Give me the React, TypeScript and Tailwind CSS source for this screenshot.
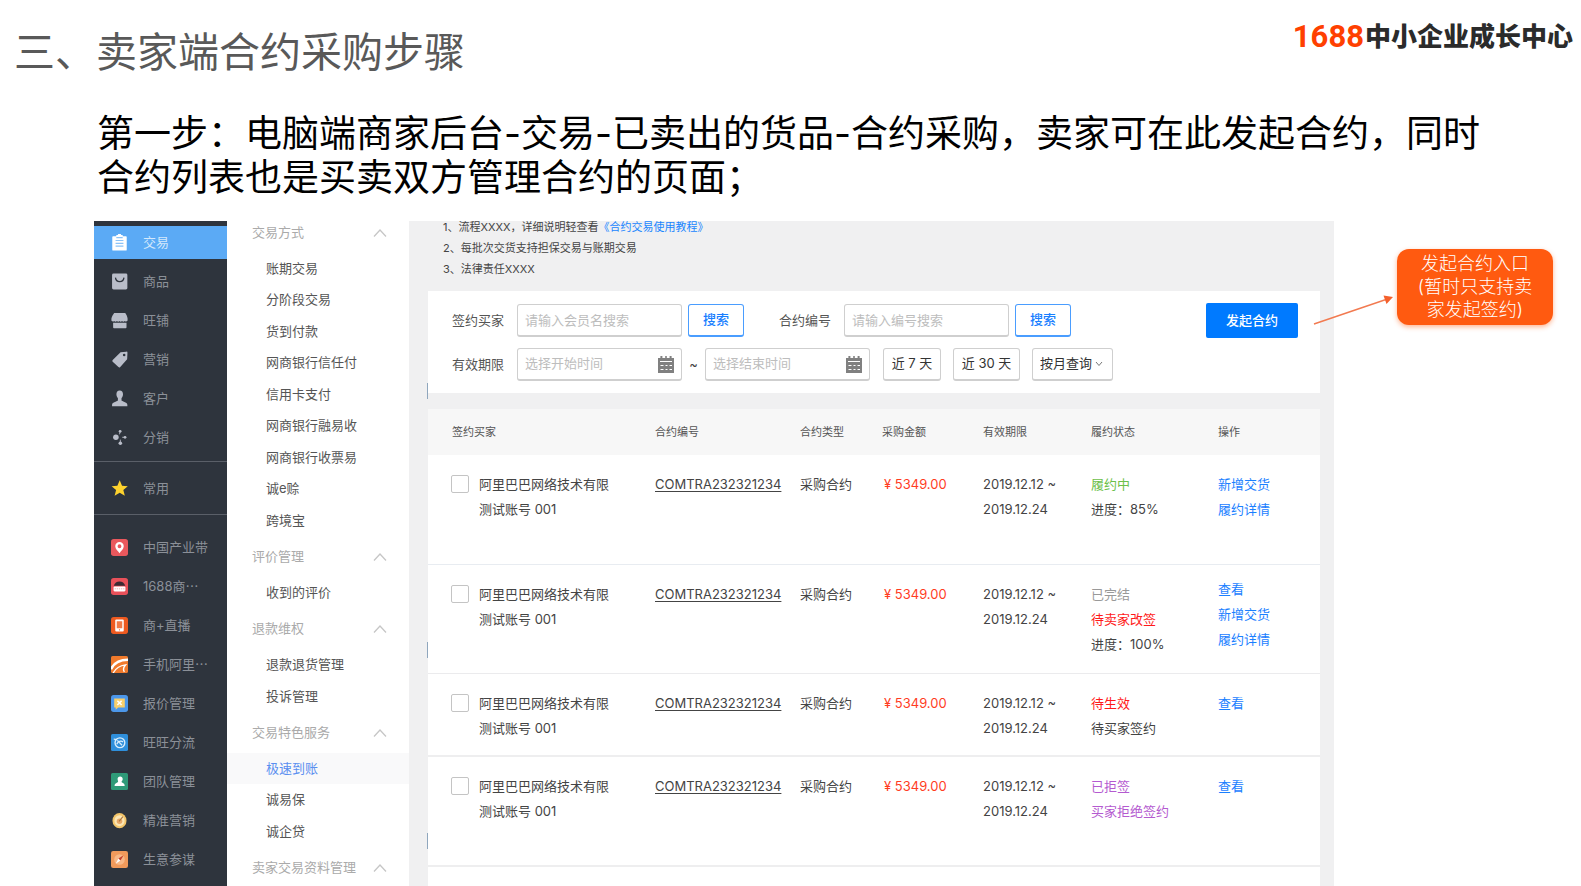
import React from "react";

type Icon = () => React.ReactElement;

const glyph = "h-[17px] w-[17px] shrink-0";

const ClipboardIcon: Icon = () => (
  <svg viewBox="0 0 16 16" className={glyph} aria-hidden="true">
    <path fill="#fff" d="M2 2h3V1h1.5a1.5 1.5 0 0 1 3 0H11v1h3a.8.8 0 0 1 .8.8v12a.8.8 0 0 1-.8.8H2a.8.8 0 0 1-.8-.8v-12A.8.8 0 0 1 2 2z" />
    <path stroke="#8cc3f8" strokeWidth="1" d="M4.3 6.2h7.4M4.3 8.8h7.4M4.3 11.4h7.4M5 3.4h6" />
  </svg>
);
const BagIcon: Icon = () => (
  <svg viewBox="0 0 16 16" className={glyph} aria-hidden="true">
    <rect x="1" y="0.5" width="14.4" height="15" rx="1.4" fill="#b9bdc9" />
    <path d="M4.2 4.4c.6 5 7.4 5 8 0" fill="none" stroke="#2e343d" strokeWidth="1.2" />
  </svg>
);
const ShopIcon: Icon = () => (
  <svg viewBox="0 0 16 16" className={glyph} aria-hidden="true">
    <path fill="#b9bdc9" d="M3 1h10.4c1 1.4 2 3.200 2.200 5.200v1.600c0 1-1.600 1.600-2.600.6-.8 1-2 1-2.600 0-.8 1-2 1-2.400 0-.6 1-1.800 1-2.400 0-.8 1-2 1-2.600 0-1 1-2.600.4-2.600-.6V6.200C.8 4.200 2 2.400 3 1zM2 10.200h12.600v4.200a.8.8 0 0 1-.8.8H2.800a.8.8 0 0 1-.8-.8z" />
  </svg>
);
const TagIcon: Icon = () => (
  <svg viewBox="0 0 16 16" className={glyph} aria-hidden="true">
    <path fill="#b9bdc9" fillRule="evenodd" d="M9 1.200 14.400.6a1 1 0 0 1 1.100 1.100l-.3 6-6.500 7.300a1.200 1.200 0 0 1-1.700.1L1.600 10.200a1.200 1.200 0 0 1 0-1.700zM12.400 2.600a1.200 1.200 0 1 0 0 2.400 1.200 1.200 0 0 0 0-2.400z" />
  </svg>
);
const PersonIcon: Icon = () => (
  <svg viewBox="0 0 16 16" className={glyph} aria-hidden="true">
    <path fill="#b9bdc9" d="M8.200.4c2 0 3.100 1.500 3.100 3.500 0 1.700-.7 3-1.400 3.700v2.200c0 .7 5.500 1.500 5.500 4v1.400H1v-1.400c0-2.500 5.500-3.300 5.500-4V7.600C5.800 6.900 5.100 5.600 5.100 3.900 5.100 1.900 6.200.4 8.200.4z" />
  </svg>
);
const ShareIcon: Icon = () => (
  <svg viewBox="0 0 16 16" className={glyph} aria-hidden="true">
    <g fill="#b9bdc9">
      <circle cx="4.600" cy="7.800" r="2.600" />
      <circle cx="8.600" cy="2.200" r="1.300" />
      <circle cx="13.200" cy="7.800" r="1.300" />
      <circle cx="8.800" cy="13.400" r="1.700" />
    </g>
    <path d="M8.600 2.200 8 5M10.500 7.800h2.700M8.800 13.400v-3.400" stroke="#b9bdc9" strokeWidth=".8" />
  </svg>
);
const StarIcon: Icon = () => (
  <svg viewBox="0 0 16 16" className={glyph} aria-hidden="true">
    <path fill="#fdd22e" d="m8.200.2 2.200 5.200 5.400.4-4.200 3.600 1.400 5.500-4.800-3-4.800 3 1.400-5.500L.600 5.800l5.400-.4z" />
  </svg>
);
const PinIcon: Icon = () => (
  <svg viewBox="0 0 16 16" className={glyph} aria-hidden="true">
    <rect width="16" height="16" rx="2.500" fill="#e9585d" />
    <path fill="#fff" fillRule="evenodd" d="M8 2.800a4 4 0 0 1 4 4c0 2.600-2.600 4.400-4 6.600-1.400-2.200-4-4-4-6.600a4 4 0 0 1 4-4zm0 2.200a1.800 1.800 0 1 0 0 3.600A1.800 1.800 0 0 0 8 5z" />
  </svg>
);
const MarketIcon: Icon = () => (
  <svg viewBox="0 0 16 16" className={glyph} aria-hidden="true">
    <rect width="16" height="16" rx="2.500" fill="#e8515a" />
    <path fill="#3a2a33" d="M2.600 7.400C3.400 4.600 5.400 3.200 8 3.200s4.600 1.400 5.400 4.200z" />
    <rect x="2.400" y="8" width="11.200" height="4.600" rx="1" fill="#fff" />
    <path d="M3.400 10.200h9.200" stroke="#e8a0a4" strokeWidth=".8" strokeDasharray="1.200 .8" />
  </svg>
);
const PhoneIcon: Icon = () => (
  <svg viewBox="0 0 16 16" className={glyph} aria-hidden="true">
    <rect width="16" height="16" rx="2.500" fill="#ee5a20" />
    <rect x="4" y="2.400" width="8" height="11.200" rx="1" fill="#fff" />
    <rect x="5.400" y="4" width="5.200" height="6.600" fill="#f07a48" />
    <circle cx="8" cy="12.100" r=".6" fill="#ee5a20" />
  </svg>
);
const AliIcon: Icon = () => (
  <svg viewBox="0 0 16 16" className={glyph} aria-hidden="true">
    <rect width="16" height="16" rx="1.500" fill="#f07a2c" />
    <path d="M0 12.500C3 6 9 3.600 16 3.600" fill="none" stroke="#fff" strokeWidth="2.400" />
    <path d="M2 16C4.500 11.500 9 9 13.600 8.400c-1.800 2-2.400 4.400-1 6.600" fill="none" stroke="#fff" strokeWidth="1.300" />
  </svg>
);
const QuoteIcon: Icon = () => (
  <svg viewBox="0 0 16 16" className={glyph} aria-hidden="true">
    <rect width="16" height="16" rx="2.500" fill="#4c97ea" />
    <path fill="#f8cf6a" d="M3 3.200h10v8.600H6.800L4.400 13.800v-2H3z" />
    <path d="m6 5.400 4 4m0-4-4 4" stroke="#fff" strokeWidth="1.500" />
  </svg>
);
const FlowIcon: Icon = () => (
  <svg viewBox="0 0 16 16" className={glyph} aria-hidden="true">
    <rect width="16" height="16" rx="1.500" fill="#2f8fdb" />
    <circle cx="8.400" cy="8.200" r="4.600" fill="none" stroke="#d9edfb" strokeWidth="1.300" />
    <path d="M5.400 9.600c1.400-3 4-3.400 6-2.200M6 6l4.400 4.600M2.600 4.800l3 .4" fill="none" stroke="#d9edfb" strokeWidth="1.200" />
  </svg>
);
const TeamIcon: Icon = () => (
  <svg viewBox="0 0 16 16" className={glyph} aria-hidden="true">
    <rect width="16" height="16" rx="1.500" fill="#2f9a78" />
    <path fill="#fff" d="M8.600 3.200c1.500 0 2.400 1 2.400 2.400 0 1.200-.6 2-1.200 2.600.2 1 3 1.200 3 3.200v.8H3.400v-.8c0-1.600 2.600-2.200 3.200-3 .4-.6-.4-1.400-.4-2.800 0-1.400.9-2.400 2.400-2.400z" />
  </svg>
);
const TargetIcon: Icon = () => (
  <svg viewBox="0 0 16 16" className={glyph} aria-hidden="true">
    <ellipse cx="8" cy="8.200" rx="6.600" ry="7.200" fill="#f3c56a" />
    <ellipse cx="8" cy="8.200" rx="4.800" ry="5.200" fill="#fbe6b4" />
    <circle cx="8" cy="8.600" r="2.600" fill="#e8a868" />
    <path d="m7.600 8.800 3.600-4.400" stroke="#a8743c" strokeWidth="1" />
  </svg>
);
const CompassIcon: Icon = () => (
  <svg viewBox="0 0 16 16" className={glyph} aria-hidden="true">
    <rect width="16" height="16" rx="2" fill="#f19a5b" />
    <circle cx="8" cy="8" r="5" fill="#f8b887" />
    <path fill="#fff" d="M4.400 12 7 7l2 2z" />
    <path fill="#c4402c" d="M11.800 4 7 7l2 2z" />
  </svg>
);

const CalendarIcon: Icon = () => (
  <svg viewBox="0 0 16 17" className="h-[17px] w-4 shrink-0" aria-hidden="true">
    <path fill="#808080" d="M0 2h2.400V0h2v2h2.800V0h1.600v2h2.800V0h2v2H16v15H0z" />
    <path stroke="#fff" strokeWidth="1" d="M2 5.500h12M2.500 9.500h3m2 0h2m2 0h2.500m-11.500 4h3m2 0h2m2 0h2.500" />
  </svg>
);

const ChevronUp: Icon = () => (
  <svg viewBox="0 0 14 10" className="h-[10px] w-[14px]" fill="none" stroke="#c6c6c6" strokeWidth="1.300" aria-hidden="true">
    <path d="M1 8.500 7 2l6 6.500" />
  </svg>
);

const mainNav: [string, Icon][] = [
  ["交易", ClipboardIcon],
  ["商品", BagIcon],
  ["旺铺", ShopIcon],
  ["营销", TagIcon],
  ["客户", PersonIcon],
  ["分销", ShareIcon],
];
const appNav: [string, Icon][] = [
  ["中国产业带", PinIcon],
  ["1688商⋯", MarketIcon],
  ["商+直播", PhoneIcon],
  ["手机阿里⋯", AliIcon],
  ["报价管理", QuoteIcon],
  ["旺旺分流", FlowIcon],
  ["团队管理", TeamIcon],
  ["精准营销", TargetIcon],
  ["生意参谋", CompassIcon],
];

const menu = [
  {
    title: "交易方式",
    height: "h-[283px]",
    items: ["账期交易", "分阶段交易", "货到付款", "网商银行信任付", "信用卡支付", "网商银行融易收", "网商银行收票易", "诚e赊", "跨境宝"],
  },
  { title: "评价管理", height: "h-[31px]", items: ["收到的评价"] },
  { title: "退款维权", height: "h-[63px]", items: ["退款退货管理", "投诉管理"] },
  { title: "交易特色服务", height: "h-[94px]", items: ["极速到账", "诚易保", "诚企贷"] },
  { title: "卖家交易资料管理", height: "h-0", items: [] },
];

type Status = [string, string];
const rows: { height: string; line: string; status: Status[]; actions: string[]; actionPad: string }[] = [
  {
    height: "h-[110px]",
    line: "border-b border-[#e8ecf1]",
    status: [["履约中", "text-[#6cc04a]"], ["进度：85%", "text-[#444]"]],
    actions: ["新增交货", "履约详情"],
    actionPad: "pt-[17px]",
  },
  {
    height: "h-[109px]",
    line: "border-b border-[#ebebed]",
    status: [["已完结", "text-[#999]"], ["待卖家改签", "text-[#ff1a1a]"], ["进度：100%", "text-[#444]"]],
    actions: ["查看", "新增交货", "履约详情"],
    actionPad: "pt-3",
  },
  {
    height: "h-[83px]",
    line: "border-b-2 border-[#eeeeef]",
    status: [["待生效", "text-[#ff1a1a]"], ["待买家签约", "text-[#444]"]],
    actions: ["查看"],
    actionPad: "pt-[17px]",
  },
  {
    height: "h-[110px]",
    line: "border-b-2 border-[#eeeeef]",
    status: [["已拒签", "text-[#b45ad0]"], ["买家拒绝签约", "text-[#b45ad0]"]],
    actions: ["查看"],
    actionPad: "pt-[17px]",
  },
];

function NavLink({ label, icon: IconView, active }: { label: string; icon: Icon; active?: boolean }) {
  return (
    <a
      href="#"
      className={`flex h-[33px] items-center gap-[15px] pl-[17px] text-[13px] whitespace-nowrap ${
        active ? "bg-[#5baaf5] text-[#d3e8fc]" : "text-[#8b9098]"
      }`}
    >
      <IconView />
      {label}
    </a>
  );
}

function Field({ id, label, placeholder }: { id: string; label: string; placeholder: string }) {
  return (
    <div className="flex items-center">
      <label htmlFor={id} className="w-[65px] text-[13px] text-[#555]">{label}</label>
      <input
        id={id}
        type="text"
        placeholder={placeholder}
        className="h-[33px] w-[165px] rounded-[3px] border border-b-2 border-[#cfcfcf] bg-white px-[7px] text-[13px] placeholder:text-[#bdbdbd]"
      />
      <button type="button" className="ml-[6px] h-[33px] w-[56px] rounded-[3px] border border-b-2 border-[#4a9dff] bg-white text-[13px] font-medium text-[#1a80ff]">
        搜索
      </button>
    </div>
  );
}

function DateField({ id, label, placeholder }: { id: string; label: string; placeholder: string }) {
  return (
    <div className="flex h-[33px] w-[165px] items-center rounded-[3px] border border-b-2 border-[#cfcfcf] bg-white px-[7px]">
      <input
        id={id}
        type="text"
        aria-label={label}
        placeholder={placeholder}
        className="min-w-0 flex-1 text-[13px] placeholder:text-[#bdbdbd]"
      />
      <CalendarIcon />
    </div>
  );
}

const smallButton = "h-[33px] rounded-[3px] border border-b-2 border-[#cfcfcf] bg-white text-[13px] text-[#333]";

export default function App() {
  return (
    <div className="flex h-screen flex-col overflow-hidden bg-white font-['Inter','Noto_Sans_CJK_SC',sans-serif] text-[#444]">
      <header className="flex items-start justify-between pr-2 pl-[14px]">
        <h1 className="pt-[22px] text-[41px] leading-[60px] text-[#595959]">三、卖家端合约采购步骤</h1>
        <div className="flex items-center pt-[17px] leading-10 whitespace-nowrap">
          <span className="font-['Roboto',sans-serif] text-[31px] font-bold text-[#ff4000]">1688</span>
          <span className="ml-px text-[26px] font-black text-[#2b2b2b]">中小企业成长中心</span>
        </div>
      </header>

      <p className="mt-[30px] pr-[80px] pl-[97px] text-[37px] leading-[44px] text-black">
        第一步：电脑端商家后台-交易-已卖出的货品-合约采购，卖家可在此发起合约，同时合约列表也是买卖双方管理合约的页面；
      </p>

      <div className="mt-[21px] flex min-h-0 flex-1 pl-[94px]">
        <div className="flex min-w-0 flex-1 overflow-hidden">
          <nav className="w-[133px] shrink-0 bg-[#2e343d] pt-[5px]" aria-label="主导航">
            <div className="flex flex-col gap-[6px] pb-[7px]">
              {mainNav.map(([label, icon], i) => (
                <NavLink key={label} label={label} icon={icon} active={i === 0} />
              ))}
            </div>
            <div className="border-y border-[#5a5f68] pt-[10px] pb-[9px]">
              <NavLink label="常用" icon={StarIcon} />
            </div>
            <div className="flex flex-col gap-[6px] pt-4">
              {appNav.map(([label, icon]) => (
                <NavLink key={label} label={label} icon={icon} />
              ))}
            </div>
          </nav>

          <nav className="w-[182px] shrink-0 overflow-hidden bg-white" aria-label="交易菜单">
            <div className="-mt-[9px]">
              {menu.map((group) => (
                <section key={group.title}>
                  <button type="button" className="flex h-[41px] w-full items-center justify-between pr-[22px] pl-[25px] text-[13px] text-[#aaa]">
                    {group.title}
                    <ChevronUp />
                  </button>
                  <ul className={`grid auto-rows-fr ${group.height}`}>
                    {group.items.map((item) => (
                      <li key={item} className={item === "极速到账" ? "flex items-center bg-[#f9f9fa] pl-[39px]" : "flex items-center pl-[39px]"}>
                        <a href="#" className={`text-[13px] ${item === "极速到账" ? "text-[#5b8ff0]" : "text-[#555]"}`}>{item}</a>
                      </li>
                    ))}
                  </ul>
                </section>
              ))}
            </div>
          </nav>

          <main className="relative flex min-w-0 flex-1 flex-col bg-[#f0f0f1] pr-[14px] pl-[19px]">
            <span className="absolute top-[162px] left-[18px] h-4 w-px bg-[#8fa6bd]" />
            <span className="absolute top-[421px] left-[18px] h-4 w-px bg-[#8fa6bd]" />
            <span className="absolute top-[612px] left-[18px] h-4 w-px bg-[#8fa6bd]" />

            <ol className="-mt-1 mb-[11px] pl-[15px] text-[11px] leading-[21px]">
              <li>1、流程XXXX，详细说明轻查看<a href="#" className="text-[#1a86ff]">《合约交易使用教程》</a></li>
              <li>2、每批次交货支持担保交易与账期交易</li>
              <li>3、法律责任XXXX</li>
            </ol>

            <form className="bg-white px-6 py-3" onSubmit={(e) => e.preventDefault()}>
              <div className="flex items-center">
                <Field id="buyer" label="签约买家" placeholder="请输入会员名搜索" />
                <div className="ml-[35px]">
                  <Field id="contract" label="合约编号" placeholder="请输入编号搜索" />
                </div>
                <button type="submit" className="mr-[-2px] ml-auto h-[35px] w-[92px] rounded-[2px] bg-[#007aff] text-[13px] font-medium text-white">
                  发起合约
                </button>
              </div>
              <div className="mt-[10px] flex items-center">
                <label htmlFor="start" className="w-[65px] text-[13px] text-[#555]">有效期限</label>
                <DateField id="start" label="开始时间" placeholder="选择开始时间" />
                <span className="w-[23px] text-center text-[13px]">~</span>
                <DateField id="end" label="结束时间" placeholder="选择结束时间" />
                <button type="button" className={`${smallButton} ml-[13px] w-[58px]`}>近 7 天</button>
                <button type="button" className={`${smallButton} ml-3 w-[67px]`}>近 30 天</button>
                <div className={`${smallButton} ml-3 flex w-[81px] items-center px-[7px]`}>
                  <select aria-label="按月查询" className="w-[55px] appearance-none bg-transparent">
                    <option>按月查询</option>
                  </select>
                  <svg viewBox="0 0 8 6" className="h-[6px] w-2 shrink-0" fill="none" stroke="#777" aria-hidden="true">
                    <path d="m1 1 3 3.500L7 1" />
                  </svg>
                </div>
              </div>
            </form>

            <div className="mt-4 min-h-0 flex-1 overflow-hidden bg-white">
              <table className="w-full table-fixed border-separate border-spacing-0 text-left">
                <thead>
                  <tr className="h-[46px] bg-[#f7f7f7] text-[11px] text-[#555]">
                    <th className="w-[227px] pl-6 font-normal">签约买家</th>
                    <th className="w-[145px] font-normal">合约编号</th>
                    <th className="w-[82px] font-normal">合约类型</th>
                    <th className="w-[101px] font-normal">采购金额</th>
                    <th className="w-[108px] font-normal">有效期限</th>
                    <th className="w-[127px] font-normal">履约状态</th>
                    <th className="font-normal">操作</th>
                  </tr>
                </thead>
                <tbody>
                  {rows.map((row, i) => {
                    const cell = `pt-[17px] align-top ${row.line}`;
                    return (
                      <tr key={i} className={`${row.height} text-[13px] leading-[25px]`}>
                        <td className={`${cell} pl-[23px]`}>
                          <label className="flex items-start gap-[10px]">
                            <input type="checkbox" className="mt-[3px] h-[18px] w-[18px] shrink-0 appearance-none rounded-[2px] border border-[#c4c4c4] bg-white" />
                            <span>
                              阿里巴巴网络技术有限
                              <br />
                              测试账号 001
                            </span>
                          </label>
                        </td>
                        <td className={cell}>
                          <a href="#" className="underline underline-offset-2">COMTRA232321234</a>
                        </td>
                        <td className={cell}>采购合约</td>
                        <td className={`${cell} pl-[2px] text-[#ff3d1f]`}>¥ 5349.00</td>
                        <td className={cell}>
                          2019.12.12 ~
                          <br />
                          2019.12.24
                        </td>
                        <td className={cell}>
                          {row.status.map(([text, color]) => (
                            <div key={text} className={color}>{text}</div>
                          ))}
                        </td>
                        <td className={`align-top ${row.line} ${row.actionPad}`}>
                          {row.actions.map((action) => (
                            <a key={action} href="#" className="block text-[#1a80ff]">{action}</a>
                          ))}
                        </td>
                      </tr>
                    );
                  })}
                </tbody>
              </table>
            </div>
          </main>
        </div>

        <aside className="relative w-[247px] shrink-0">
          <svg viewBox="0 0 84 34" className="absolute top-[72px] left-[-22px] h-[34px] w-[84px]" aria-hidden="true">
            <path d="M2 31 74 6.500" stroke="#f27a50" strokeWidth="1.400" />
            <path d="M81 4 74.500 11 71.500 2.500z" fill="#f4602c" />
          </svg>
          <div className="mt-7 ml-[63px] w-[156px] rounded-xl bg-[#ff5a10] pt-[3px] pb-1 text-center text-[18px] leading-[23px] font-light text-white shadow-[0_2px_5px_rgba(255,90,16,0.45)]">
            发起合约入口
            <br />
            (暂时只支持卖
            <br />
            家发起签约)
          </div>
        </aside>
      </div>
    </div>
  );
}
